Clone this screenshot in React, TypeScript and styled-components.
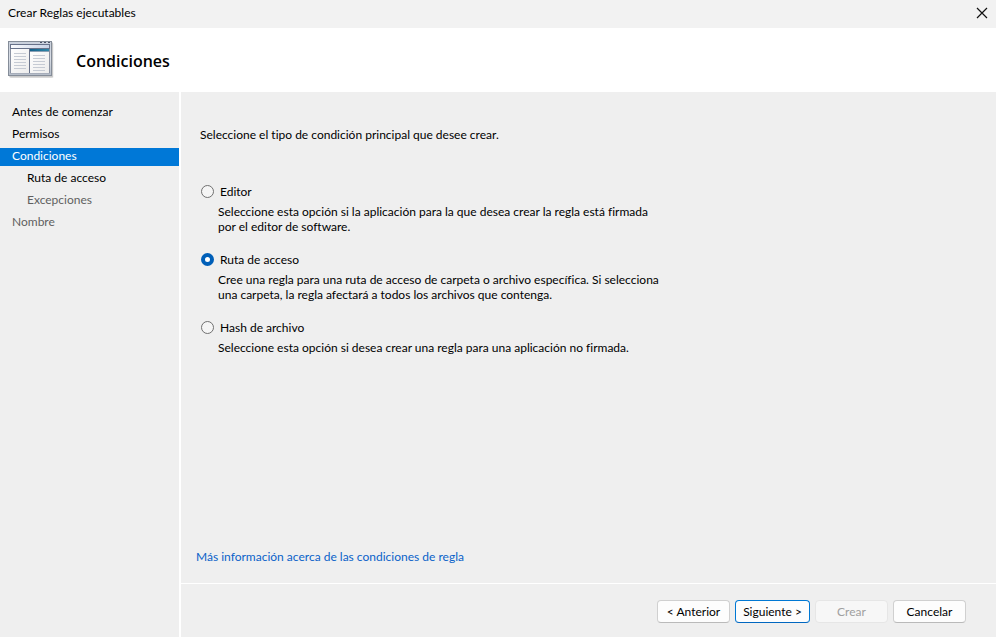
import React, { useState } from "react";
import styled, { createGlobalStyle } from "styled-components";

const GlobalStyle = createGlobalStyle`
  *, *::before, *::after { box-sizing: border-box; }
  body {
    margin: 0;
    background: #efefef;
    color: #000;
    font-family: Lato, "Segoe UI", "Open Sans", sans-serif;
    font-size: 12px;
    line-height: 15px;
    font-variant-ligatures: none;
  }
  button, input { font: inherit; }
`;

const Wizard = styled.div`
  display: flex;
  flex-direction: column;
  min-height: 100vh;
`;

const TitleBar = styled.div`
  display: flex;
  align-items: center;
  justify-content: space-between;
  height: 28px;
  padding: 0 8px 3px;
  background: #f2f2f2;
`;

const CloseButton = styled.button`
  display: flex;
  padding: 0;
  border: 0;
  background: none;
  color: #111;
`;

const Header = styled.header`
  display: flex;
  align-items: center;
  gap: 22px;
  height: 64px;
  padding: 0 8px;
  background: #fff;
`;

const Heading = styled.h1`
  margin: 0;
  padding-top: 2px;
  font-family: "Open Sans", "Segoe UI", sans-serif;
  font-size: 16px;
  line-height: 20px;
  font-weight: 600;
`;

const Body = styled.div`
  display: flex;
  flex: 1;
`;

const Steps = styled.nav`
  flex: none;
  width: 181px;
  padding-top: 12px;
  border-right: 2px solid #fff;
`;

const StepList = styled.ul`
  display: flex;
  flex-direction: column;
  gap: 4px;
  margin: 0;
  padding: 0;
  list-style: none;
`;

type StepState = "done" | "current" | "pending";

const stepColors: Record<StepState, string> = {
  done: "#000",
  current: "#fff",
  pending: "#5f5f5f",
};

const Step = styled.li<{ $state: StepState; $nested?: boolean }>`
  padding: 0 12px 2px ${(p) => (p.$nested ? "27px" : "12px")};
  line-height: 16px;
  color: ${(p) => stepColors[p.$state]};
  background: ${(p) => (p.$state === "current" ? "#0078d7" : "transparent")};
`;

const Content = styled.div`
  display: flex;
  flex: 1;
  flex-direction: column;
  min-width: 0;
`;

const Page = styled.main`
  display: flex;
  flex: 1;
  flex-direction: column;
  padding: 35px 15px 19px;
`;

const Intro = styled.p`
  margin: 0;
  padding-left: 4px;
`;

const Options = styled.fieldset`
  display: flex;
  flex-direction: column;
  gap: 17px;
  margin: 41px 0 0;
  padding: 0 0 0 5px;
  border: 0;
`;

const OptionLabel = styled.label`
  display: flex;
  align-items: center;
  gap: 6px;
  height: 17px;
`;

const Radio = styled.input`
  flex: none;
  appearance: none;
  width: 13px;
  height: 13px;
  margin: 0;
  border: 1px solid #707070;
  border-radius: 50%;
  background: #f5f5f5;

  &:checked {
    border: 4px solid #005fb8;
    background: #fff;
  }
`;

const OptionText = styled.p`
  max-width: 480px;
  margin: 4px 0 0;
  padding-left: 17px;
`;

const MoreLink = styled.a`
  align-self: flex-start;
  margin-top: auto;
  color: #0a62c9;
  text-decoration: none;
`;

const Footer = styled.footer`
  display: flex;
  justify-content: flex-end;
  gap: 5px;
  padding: 16px 30px 14px;
  border-top: 1px solid #fff;
`;

const Button = styled.button<{ $primary?: boolean }>`
  min-width: ${(p) => (p.$primary ? "75px" : "73px")};
  height: 23px;
  padding: 0 4px;
  border: 1px solid ${(p) => (p.$primary ? "#0078d4" : "#d0d0d0")};
  border-bottom-color: ${(p) => (p.$primary ? "#0067c0" : "#bababa")};
  border-radius: 4px;
  background: #fdfdfd;
  color: #000;
  white-space: nowrap;

  &:disabled {
    border-color: #e6e6e6;
    background: #f7f7f7;
    color: #a0a0a0;
  }
`;

const steps: { label: string; state: StepState; nested?: boolean }[] = [
  { label: "Antes de comenzar", state: "done" },
  { label: "Permisos", state: "done" },
  { label: "Condiciones", state: "current" },
  { label: "Ruta de acceso", state: "done", nested: true },
  { label: "Excepciones", state: "pending", nested: true },
  { label: "Nombre", state: "pending" },
];

const options = [
  {
    id: "editor",
    label: "Editor",
    text: ["Seleccione esta opción si la aplicación para la que desea crear la regla está firmada", "por el editor de software."],
  },
  {
    id: "ruta",
    label: "Ruta de acceso",
    text: ["Cree una regla para una ruta de acceso de carpeta o archivo específica. Si selecciona", "una carpeta, la regla afectará a todos los archivos que contenga."],
  },
  {
    id: "hash",
    label: "Hash de archivo",
    text: ["Seleccione esta opción si desea crear una regla para una aplicación no firmada."],
  },
];

function CloseIcon() {
  return (
    <svg width="12" height="12" viewBox="0 0 12 12" aria-hidden="true">
      <path d="M1 1 11 11M11 1 1 11" stroke="currentColor" strokeWidth="1.2" fill="none" />
    </svg>
  );
}

function WindowIcon() {
  const lines = [19, 22, 25, 28, 31, 34];
  return (
    <svg width="46" height="38" viewBox="0 1 46 38" aria-hidden="true">
      <defs>
        <linearGradient id="frame" x1="0" y1="0" x2="0" y2="1">
          <stop offset="0" stopColor="#c9d0dc" />
          <stop offset="0.5" stopColor="#d9dee6" />
          <stop offset="1" stopColor="#b4bcc8" />
        </linearGradient>
        <linearGradient id="bar" x1="0" y1="0" x2="1" y2="0">
          <stop offset="0" stopColor="#fafbfe" />
          <stop offset="1" stopColor="#c9d3e6" />
        </linearGradient>
        <linearGradient id="tab" x1="0" y1="0" x2="1" y2="0">
          <stop offset="0" stopColor="#14608a" />
          <stop offset="1" stopColor="#2f87a8" />
        </linearGradient>
        <linearGradient id="paper" x1="0" y1="0" x2="1" y2="1">
          <stop offset="0" stopColor="#fff" />
          <stop offset="1" stopColor="#ececec" />
        </linearGradient>
      </defs>
      <rect x="2" y="3" width="43.5" height="35" rx="1" fill="#000" opacity="0.08" />
      <rect x="1" y="2" width="44" height="35.5" rx="1" fill="#000" opacity="0.14" />
      <rect x="0.5" y="1.5" width="43" height="34" fill="url(#frame)" stroke="#858d99" />
      <path d="M32 2.5h2M36 2.5h2M40 2.5h2" stroke="#4a5266" />
      <rect x="2.5" y="4.5" width="39" height="4" fill="url(#bar)" stroke="#68728a" />
      <rect x="2" y="9" width="19" height="25" fill="url(#paper)" />
      <rect x="22" y="9" width="19" height="25" fill="url(#paper)" />
      <path d="M2.5 9v25M41.5 9v25" stroke="#8a92a2" />
      <path d="M21.5 9v25" stroke="#68728a" />
      <rect x="22" y="9" width="19" height="2" fill="url(#tab)" />
      <path d="M22 11.5h19" stroke="#8aa0b4" />
      <path d="M2 33.5h40" stroke="#a6adba" />
      {lines.map((y) => (
        <path key={y} d={`M6 ${y - 5.5}h12M25 ${y - 3.5}h12`} stroke="#c6cbd4" />
      ))}
    </svg>
  );
}

export default function App() {
  const [selected, setSelected] = useState("ruta");

  return (
    <Wizard>
      <GlobalStyle />
      <TitleBar>
        <span>Crear Reglas ejecutables</span>
        <CloseButton type="button" aria-label="Cerrar">
          <CloseIcon />
        </CloseButton>
      </TitleBar>
      <Header>
        <WindowIcon />
        <Heading>Condiciones</Heading>
      </Header>
      <Body>
        <Steps>
          <StepList>
            {steps.map((s) => (
              <Step key={s.label} $state={s.state} $nested={s.nested} aria-current={s.state === "current" ? "step" : undefined}>
                {s.label}
              </Step>
            ))}
          </StepList>
        </Steps>
        <Content>
          <Page>
            <Intro id="intro">Seleccione el tipo de condición principal que desee crear.</Intro>
            <Options aria-labelledby="intro">
              {options.map((o) => (
                <div key={o.id}>
                  <OptionLabel>
                    <Radio
                      type="radio"
                      name="condition"
                      value={o.id}
                      checked={selected === o.id}
                      onChange={() => setSelected(o.id)}
                      aria-describedby={`${o.id}-text`}
                    />
                    {o.label}
                  </OptionLabel>
                  <OptionText id={`${o.id}-text`}>
                    {o.text.map((line, i) => (
                      <React.Fragment key={line}>
                        {i > 0 && <br />}
                        {line}
                      </React.Fragment>
                    ))}
                  </OptionText>
                </div>
              ))}
            </Options>
            <MoreLink href="#condiciones">Más información acerca de las condiciones de regla</MoreLink>
          </Page>
          <Footer>
            <Button type="button">&lt; Anterior</Button>
            <Button type="button" $primary>Siguiente &gt;</Button>
            <Button type="button" disabled>Crear</Button>
            <Button type="button">Cancelar</Button>
          </Footer>
        </Content>
      </Body>
    </Wizard>
  );
}
